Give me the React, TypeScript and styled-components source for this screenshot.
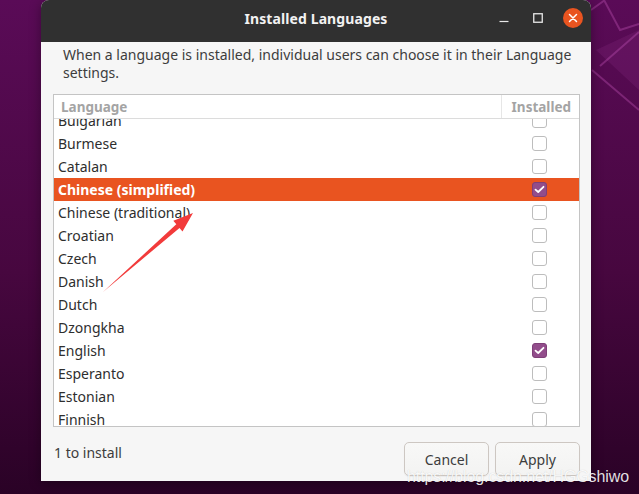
import React from "react"
import styled, { createGlobalStyle } from "styled-components"

const GlobalStyle = createGlobalStyle`
  html, body {
    margin: 0;
    padding: 0;
  }
  body {
    font-family: "Noto Sans", "DejaVu Sans", sans-serif;
    -webkit-font-smoothing: antialiased;
  }
`

const Desktop = styled.div`
  position: relative;
  width: 639px;
  height: 494px;
  overflow: hidden;
  background: linear-gradient(180deg, #5a0b57 0%, #47073f 55%, #2a0226 100%);
`

const Wallpaper = styled.svg`
  position: absolute;
  inset: 0;
  pointer-events: none;
`

const Window = styled.div`
  position: relative;
  margin-left: 41px;
  width: 550px;
  height: 481px;
  display: flex;
  flex-direction: column;
  background: #f6f6f6;
  border-radius: 8px 8px 0 0;
  overflow: hidden;
  box-shadow: 0 2px 12px rgba(0, 0, 0, 0.35);
`

const TitleBar = styled.div`
  height: 42px;
  flex: none;
  display: grid;
  grid-template-columns: 1fr auto 1fr;
  align-items: center;
  background: #303030;
  padding-bottom: 6px;
  box-sizing: border-box;
`

const Title = styled.div`
  grid-column: 2;
  color: #f2f2f2;
  font-weight: 700;
  font-size: 14px;
  letter-spacing: 0.1px;
`

const Controls = styled.div`
  grid-column: 3;
  justify-self: end;
  display: flex;
  align-items: center;
  gap: 14px;
  padding-right: 8px;
`

const CtrlButton = styled.div`
  width: 20px;
  height: 20px;
  display: flex;
  align-items: center;
  justify-content: center;
`

const CloseButton = styled(CtrlButton)`
  margin-left: 1px;
  border-radius: 50%;
  background: #e95420;
`

const Description = styled.p`
  margin: 4px 0 0;
  padding: 0 8px 0 22px;
  color: #3d3d3d;
  font-size: 14px;
  line-height: 18px;
`

const ListBox = styled.div`
  margin: 12px 11px 0 12px;
  height: 333px;
  flex: none;
  border: 1px solid #c4c4c4;
  background: #ffffff;
  display: flex;
  flex-direction: column;
  box-sizing: border-box;
`

const HeaderRow = styled.div`
  height: 24px;
  flex: none;
  display: grid;
  grid-template-columns: 1fr 78px;
  border-bottom: 1px solid #dcdcdc;
  box-sizing: border-box;
  color: #a4a4a4;
  font-weight: 700;
  font-size: 13.5px;
`

const HeaderCell = styled.div<{ $right?: boolean }>`
  display: flex;
  align-items: center;
  padding: ${(p) => (p.$right ? "0 8px 0 7px" : "0 7px")};
  justify-content: ${(p) => (p.$right ? "flex-end" : "flex-start")};
  border-left: ${(p) => (p.$right ? "1px solid #e6e6e6" : "none")};
`

const Rows = styled.div`
  flex: 1;
  overflow: hidden;
`

const RowsInner = styled.div`
  margin-top: -10px;
`

const Row = styled.div<{ $selected?: boolean }>`
  height: 23px;
  display: grid;
  grid-template-columns: 1fr 78px;
  align-items: center;
  background: ${(p) => (p.$selected ? "#e95420" : "transparent")};
  color: ${(p) => (p.$selected ? "#ffffff" : "#2e2e2e")};
  font-weight: ${(p) => (p.$selected ? 700 : 400)};
  font-size: 14px;
`

const LangName = styled.span`
  padding-left: 4px;
  white-space: nowrap;
`

const CheckCell = styled.div`
  display: flex;
  justify-content: center;
  padding-right: 1px;
`

const CheckBox = styled.div<{ $checked?: boolean }>`
  width: 15px;
  height: 15px;
  box-sizing: border-box;
  border-radius: 3px;
  border: 1px solid ${(p) => (p.$checked ? "#7f3f78" : "#bdbdbd")};
  background: ${(p) => (p.$checked ? "#924d8b" : "#ffffff")};
  display: flex;
  align-items: center;
  justify-content: center;
`

const Footer = styled.div`
  flex: 1;
  display: flex;
  align-items: flex-start;
  justify-content: space-between;
  padding: 0 11px 0 13px;
`

const Status = styled.span`
  margin-top: 16px;
  color: #3d3d3d;
  font-size: 14px;
  line-height: 20px;
`

const ButtonGroup = styled.div`
  display: flex;
  gap: 6px;
  margin-top: 15px;
`

const Button = styled.button`
  width: 85px;
  height: 34px;
  border: 1px solid #cdc7c2;
  border-radius: 5px;
  background: linear-gradient(#f8f8f7, #f3f3f2);
  color: #3d3d3d;
  font-family: "Noto Sans", "DejaVu Sans", sans-serif;
  font-size: 14px;
  box-shadow: 0 1px 1px rgba(0, 0, 0, 0.05);
`

const Arrow = styled.svg`
  position: absolute;
  left: 0;
  top: 0;
  pointer-events: none;
`

const Watermark = styled.div`
  position: absolute;
  left: 407px;
  top: 467px;
  white-space: nowrap;
  font-family: "Liberation Sans", Arial, sans-serif;
  font-size: 16px;
  line-height: 20px;
  color: rgba(255, 255, 255, 0.88);
  text-shadow: 0 0 1px rgba(0, 0, 0, 0.18);
  letter-spacing: -0.1px;
`

const languages: { name: string; installed: boolean; selected?: boolean }[] = [
  { name: "Bulgarian", installed: false },
  { name: "Burmese", installed: false },
  { name: "Catalan", installed: false },
  { name: "Chinese (simplified)", installed: true, selected: true },
  { name: "Chinese (traditional)", installed: false },
  { name: "Croatian", installed: false },
  { name: "Czech", installed: false },
  { name: "Danish", installed: false },
  { name: "Dutch", installed: false },
  { name: "Dzongkha", installed: false },
  { name: "English", installed: true },
  { name: "Esperanto", installed: false },
  { name: "Estonian", installed: false },
  { name: "Finnish", installed: false },
]

const Check = () => (
  <svg width="11" height="9" viewBox="0 0 11 9">
    <path d="M1.5 4.6 L4.2 7 L9.5 1.8" fill="none" stroke="#fff" strokeWidth="1.8" strokeLinecap="round" strokeLinejoin="round" />
  </svg>
)

export default function App() {
  return (
    <>
      <GlobalStyle />
      <Desktop>
        <Wallpaper width="639" height="494" viewBox="0 0 639 494">
          <path d="M591 10 L605 0 M600 66 L639 32 M604 0 L620 30 L639 24 M592 70 L639 110" stroke="rgba(200,90,190,0.35)" strokeWidth="2" fill="none" />
          <path d="M596 50 L639 30 L639 90 Z" fill="rgba(190,80,180,0.12)" />
        </Wallpaper>
        <Window>
          <TitleBar>
            <Title>Installed Languages</Title>
            <Controls>
              <CtrlButton>
                <svg width="10" height="10" viewBox="0 0 10 10">
                  <path d="M0.5 8.5 H9.5" stroke="#e8e8e8" strokeWidth="1.2" />
                </svg>
              </CtrlButton>
              <CtrlButton>
                <svg width="10" height="10" viewBox="0 0 10 10">
                  <rect x="0.75" y="0.75" width="8.5" height="8.5" fill="none" stroke="#e8e8e8" strokeWidth="1.3" />
                </svg>
              </CtrlButton>
              <CloseButton>
                <svg width="10" height="10" viewBox="0 0 10 10">
                  <path d="M1.5 1.5 L8.5 8.5 M8.5 1.5 L1.5 8.5" stroke="#fff" strokeWidth="1.5" strokeLinecap="round" />
                </svg>
              </CloseButton>
            </Controls>
          </TitleBar>
          <Description>
            When a language is installed, individual users can choose it in their Language settings.
          </Description>
          <ListBox>
            <HeaderRow>
              <HeaderCell>Language</HeaderCell>
              <HeaderCell $right>Installed</HeaderCell>
            </HeaderRow>
            <Rows>
              <RowsInner>
                {languages.map((l) => (
                  <Row key={l.name} $selected={l.selected}>
                    <LangName>{l.name}</LangName>
                    <CheckCell>
                      <CheckBox $checked={l.installed}>{l.installed && <Check />}</CheckBox>
                    </CheckCell>
                  </Row>
                ))}
              </RowsInner>
            </Rows>
          </ListBox>
          <Footer>
            <Status>1 to install</Status>
            <ButtonGroup>
              <Button>Cancel</Button>
              <Button>Apply</Button>
            </ButtonGroup>
          </Footer>
        </Window>
        <Arrow width="639" height="494" viewBox="0 0 639 494">
          <polygon points="103,292 179.5,228 182.5,231.4 193,213 173.3,220.8 176.3,224.2" fill="#f23b3b" />
        </Arrow>
        <Watermark>https://blog.csdn.net/HGGshiwo</Watermark>
      </Desktop>
    </>
  )
}
